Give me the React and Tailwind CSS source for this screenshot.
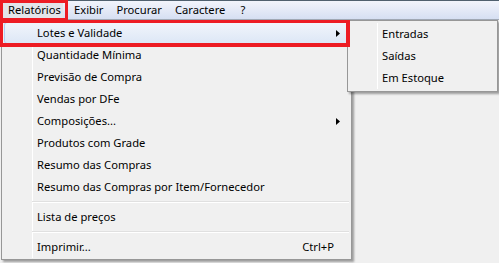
export default function App() {
  const font = { fontFamily: '"Segoe UI", "Noto Sans", "Open Sans", sans-serif' };
  const Arrow = () => (
    <svg width="4" height="7" viewBox="0 0 4 7" className="block">
      <path d="M0 0 L4 3.5 L0 7 Z" fill="#000" />
    </svg>
  );
  const items = [
    { t: "Quantidade Mínima" },
    { t: "Previsão de Compra" },
    { t: "Vendas por DFe" },
    { t: "Composições...", sub: true },
    { t: "Produtos com Grade" },
    { t: "Resumo das Compras" },
    { t: "Resumo das Compras por Item/Fornecedor" },
  ];
  return (
    <div className="relative w-[499px] h-[263px] overflow-hidden bg-[#f0f0f0] text-[11.2px] text-black" style={font}>
      {/* menu bar */}
      <div className="flex h-[20px] items-center border-t border-[#50606e] border-b border-b-[#a0a8b4] bg-gradient-to-b from-[#f2f4fb] to-[#d6dff2] pl-[3px]">
        <div className="flex h-[16px] w-[60px] items-center bg-[#e3e5ea] pl-[5px] leading-none">Relatórios</div>
        <div className="ml-[11px] leading-none">Exibir</div>
        <div className="ml-[13px] leading-none">Procurar</div>
        <div className="ml-[13px] leading-none">Caractere</div>
        <div className="ml-[15px] leading-none">?</div>
      </div>

      {/* main dropdown */}
      <div className="absolute left-[1px] top-[20px] w-[351px] border border-[#979797] bg-[#f0f0f0] py-[1px] shadow-[2px_2px_2px_rgba(0,0,0,0.35)]">
        <div className="relative flex flex-col">
          <div className="absolute left-[30px] top-0 bottom-0 w-px bg-[#e2e3e3] border-r border-white"></div>
          <div className="relative mx-[2px] flex h-[22px] items-center rounded-[3px] border border-[#aecff7] bg-gradient-to-b from-[#f1f5fb] to-[#dde7f6] pl-[32px] pr-[8px]">
            <span className="flex-1">Lotes e Validade</span>
            <Arrow />
          </div>
          {items.map((it) => (
            <div key={it.t} className="relative flex h-[22px] items-center pl-[35px] pr-[11px]">
              <span className="flex-1">{it.t}</span>
              {it.sub && <Arrow />}
            </div>
          ))}
          <div className="relative my-[3px] ml-[30px] mr-[2px] h-[2px] border-t border-[#e0e0e0] border-b border-b-white"></div>
          <div className="relative flex h-[22px] items-center pl-[35px] pr-[11px]">
            <span className="flex-1">Lista de preços</span>
          </div>
          <div className="relative my-[3px] ml-[30px] mr-[2px] h-[2px] border-t border-[#e0e0e0] border-b border-b-white"></div>
          <div className="relative flex h-[22px] items-center pl-[35px] pr-[17px]">
            <span className="flex-1">Imprimir...</span>
            <span>Ctrl+P</span>
          </div>
        </div>
      </div>

      {/* submenu */}
      <div className="absolute left-[347px] top-[20px] w-[151px] border border-[#979797] bg-[#f0f0f0] py-[2px] shadow-[2px_2px_2px_rgba(0,0,0,0.35)]">
        <div className="relative flex flex-col">
          <div className="absolute left-[29px] top-0 bottom-0 w-px bg-[#e2e3e3] border-r border-white"></div>
          <div className="relative flex h-[22px] items-center pl-[34px]">Entradas</div>
          <div className="relative flex h-[22px] items-center pl-[34px]">Saídas</div>
          <div className="relative flex h-[22px] items-center pl-[34px]">Em Estoque</div>
        </div>
      </div>

      {/* red annotation boxes */}
      <div className="pointer-events-none absolute left-0 top-0 h-[21px] w-[68px] border-[3px] border-[#ed1c24]"></div>
      <div className="pointer-events-none absolute left-0 top-[20px] h-[27px] w-[350px] border-[3px] border-b-4 border-r-4 border-[#ed1c24]"></div>
    </div>
  );
}
